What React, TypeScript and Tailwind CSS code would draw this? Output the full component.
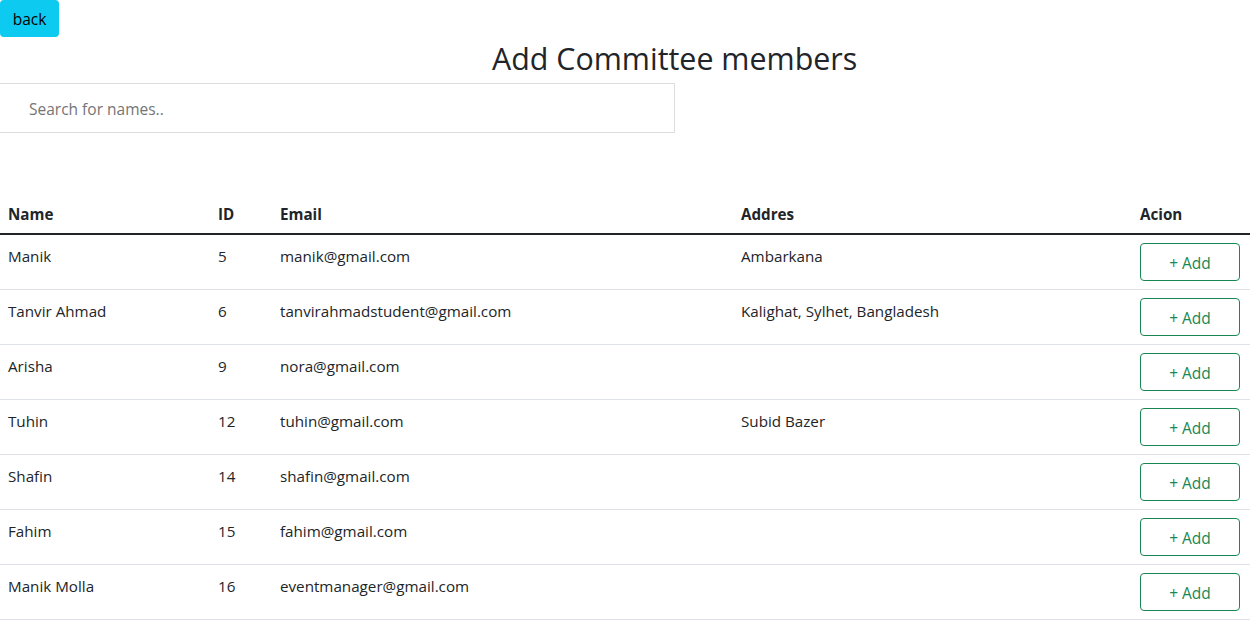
import React from "react";

const members = [
  { name: "Manik", id: 5, email: "manik@gmail.com", address: "Ambarkana" },
  { name: "Tanvir Ahmad", id: 6, email: "tanvirahmadstudent@gmail.com", address: "Kalighat, Sylhet, Bangladesh" },
  { name: "Arisha", id: 9, email: "nora@gmail.com", address: "" },
  { name: "Tuhin", id: 12, email: "tuhin@gmail.com", address: "Subid Bazer" },
  { name: "Shafin", id: 14, email: "shafin@gmail.com", address: "" },
  { name: "Fahim", id: 15, email: "fahim@gmail.com", address: "" },
  { name: "Manik Molla", id: 16, email: "eventmanager@gmail.com", address: "" },
];

export default function App() {
  return (
    <div className="min-h-screen bg-white text-[#212529] font-['Open_Sans',sans-serif] text-[15.2px] leading-6">
      <button className="bg-[#0dcaf0] text-black rounded-[4px] w-[59px] py-[6px] h-[37px] leading-6 text-[15.5px]">back</button>

      <h2 className="text-[30.4px] leading-[38px] font-normal pt-[3px] mb-[5px] pl-[492px]">Add Committee members</h2>

      <input
        type="text"
        placeholder="Search for names.."
        className="block w-[675px] h-[50px] border border-l-0 border-[#ddd] pl-[29px] pr-5 pt-[13px] pb-[11px] text-[15.5px] placeholder:text-[#757575] outline-none mb-3"
      />

      <table className="w-full mt-[60px] border-collapse text-left">
        <thead>
          <tr className="border-b-2 border-[#212529]">
            <th className="w-[210px] px-2 pt-[9px] pb-[7px] font-bold">Name</th>
            <th className="w-[62px] px-2 pt-[9px] pb-[7px] font-bold">ID</th>
            <th className="w-[461px] px-2 pt-[9px] pb-[7px] font-bold">Email</th>
            <th className="w-[399px] px-2 pt-[9px] pb-[7px] font-bold">Addres</th>
            <th className="px-2 pt-[9px] pb-[7px] font-bold">Acion</th>
          </tr>
        </thead>
        <tbody>
          {members.map((m) => (
            <tr key={m.id} className="border-b border-[#dee2e6] align-top">
              <td className="px-2 pt-[9px] pb-[7px]">{m.name}</td>
              <td className="px-2 pt-[9px] pb-[7px]">{m.id}</td>
              <td className="px-2 pt-[9px] pb-[7px]">{m.email}</td>
              <td className="px-2 pt-[9px] pb-[7px]">{m.address}</td>
              <td className="p-2">
                <button className="w-[100px] h-[38px] border border-[#198754] text-[#198754] rounded-[4px] leading-6 text-[15.5px] pt-[1px]">
                  + Add
                </button>
              </td>
            </tr>
          ))}
        </tbody>
      </table>
    </div>
  );
}
